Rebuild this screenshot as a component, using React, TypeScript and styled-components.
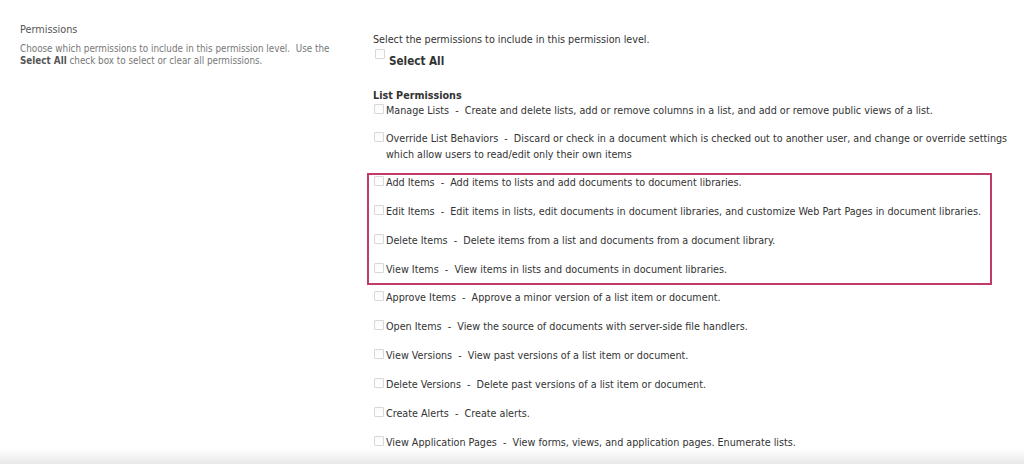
import React from "react";
import styled, { createGlobalStyle } from "styled-components";

const Global = createGlobalStyle`
  html, body { margin: 0; padding: 0; background: #ffffff; }
  body {
    font-family: "DejaVu Sans Condensed", "DejaVu Sans", sans-serif;
    color: #333;
    overflow: hidden;
  }
`;

const Page = styled.div`
  display: flex;
  width: 1024px;
  height: 464px;
  position: relative;
  overflow: hidden;
`;

const LeftCol = styled.div`
  width: 353px;
  padding: 23px 0 0 20px;
  flex: none;
`;

const SectionTitle = styled.div`
  font-size: 10.8px;
  line-height: 14px;
  color: #555;
`;

const SectionDesc = styled.div`
  margin-top: 6px;
  font-size: 9.8px;
  line-height: 12px;
  color: #777;
  b { color: #555; }
`;

const RightCol = styled.div`
  flex: 1;
  padding-top: 32px;
`;

const Intro = styled.div`
  font-size: 10.7px;
  line-height: 16px;
  color: #333;
`;

const SelectAllRow = styled.label`
  display: flex;
  align-items: flex-start;
  height: 21px;
  margin-left: 2px;
`;

const SelectAllText = styled.span`
  font-size: 11.6px;
  font-weight: bold;
  line-height: 16px;
  color: #333;
  margin-top: 5px;
  margin-left: 2px;
`;

const GroupTitle = styled.div`
  margin-top: 19px;
  font-size: 10.7px;
  font-weight: bold;
  line-height: 15px;
  color: #333;
`;

const Box = styled.input.attrs({ type: "checkbox" })`
  appearance: none;
  -webkit-appearance: none;
  flex: none;
  width: 10px;
  height: 10px;
  margin: 1px 2px 0 0;
  border: 1px solid #d8d8d8;
  border-radius: 1px;
  background: linear-gradient(#fafafa, #ffffff);
`;

const Row = styled.label<{ $gap?: number }>`
  display: flex;
  align-items: flex-start;
  margin-bottom: ${(p) => (p.$gap ?? 13)}px;
  margin-left: 1px;
  font-size: 10.7px;
  line-height: 16px;
  color: #333;
`;

const Highlight = styled.div`
  width: 617px;
  margin: 10px 0 5px -6px;
  padding: 0 0 5px 4px;
  border: 2px solid #c23b67;
`;

const RowText = styled.span<{ $max?: number }>`
  white-space: pre-wrap;
  max-width: ${(p) => p.$max ?? 630}px;
`;

const BottomShade = styled.div`
  position: absolute;
  left: 0;
  right: 0;
  bottom: 0;
  height: 15px;
  background: linear-gradient(rgba(235,235,235,0), rgba(228,228,228,0.85));
  pointer-events: none;
`;

type Perm = { name: string; desc: string };

const before: Perm[] = [
  { name: "Manage Lists", desc: "Create and delete lists, add or remove columns in a list, and add or remove public views of a list." },
  { name: "Override List Behaviors", desc: "Discard or check in a document which is checked out to another user, and change or override settings which allow users to read/edit only their own items" },
];

const boxed: Perm[] = [
  { name: "Add Items", desc: "Add items to lists and add documents to document libraries." },
  { name: "Edit Items", desc: "Edit items in lists, edit documents in document libraries, and customize Web Part Pages in document libraries." },
  { name: "Delete Items", desc: "Delete items from a list and documents from a document library." },
  { name: "View Items", desc: "View items in lists and documents in document libraries." },
];

const after: Perm[] = [
  { name: "Approve Items", desc: "Approve a minor version of a list item or document." },
  { name: "Open Items", desc: "View the source of documents with server-side file handlers." },
  { name: "View Versions", desc: "View past versions of a list item or document." },
  { name: "Delete Versions", desc: "Delete past versions of a list item or document." },
  { name: "Create Alerts", desc: "Create alerts." },
  { name: "View Application Pages", desc: "View forms, views, and application pages. Enumerate lists." },
];

const PermRow = ({ p, gap }: { p: Perm; gap?: number }) => (
  <Row $gap={gap}>
    <Box />
    <RowText>{`${p.name}  -  ${p.desc}`}</RowText>
  </Row>
);

export default function App() {
  return (
    <>
      <Global />
      <Page>
        <LeftCol>
          <SectionTitle>Permissions</SectionTitle>
          <SectionDesc>
            Choose which permissions to include in this permission level.&nbsp; Use the
            <br />
            <b>Select All</b> check box to select or clear all permissions.
          </SectionDesc>
        </LeftCol>
        <RightCol>
          <Intro>Select the permissions to include in this permission level.</Intro>
          <SelectAllRow>
            <Box />
            <SelectAllText>Select All</SelectAllText>
          </SelectAllRow>
          <GroupTitle>List Permissions</GroupTitle>
          <PermRow p={before[0]} gap={12} />
          <PermRow p={before[1]} gap={0} />
          <Highlight>
            {boxed.map((p, i) => (
              <PermRow key={p.name} p={p} gap={i === boxed.length - 1 ? 0 : 13} />
            ))}
          </Highlight>
          {after.map((p) => (
            <PermRow key={p.name} p={p} />
          ))}
        </RightCol>
        <BottomShade />
      </Page>
    </>
  );
}
